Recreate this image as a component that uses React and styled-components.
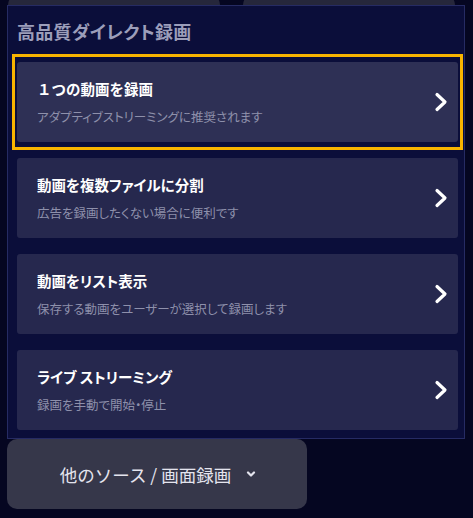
import styled, { createGlobalStyle } from 'styled-components'

const GlobalStyle = createGlobalStyle`
  html, body {
    margin: 0;
    padding: 0;
    background: #050621;
  }
  body {
    font-family: "Noto Sans CJK JP", "Noto Sans", sans-serif;
    width: 473px;
    height: 518px;
    overflow: hidden;
  }
`

const Page = styled.div`
  display: flex;
  flex-direction: column;
  align-items: flex-start;
`

const TabStrip = styled.div`
  display: flex;
  align-items: flex-end;
  gap: 23px;
  height: 5px;
  overflow: hidden;
  padding-left: 8px;
`

const Tab = styled.div`
  width: 212px;
  height: 11px;
  border-radius: 12px 12px 0 0;
  background: #26273b;
`

const Panel = styled.div`
  margin-left: 7px;
  width: 458px;
  border: 1px solid #262b63;
  background: #0b0e3a;
  padding: 12px 1px 0 4px;
  box-sizing: border-box;
`

const Heading = styled.h2`
  margin: 0 0 10px 5px;
  font-size: 18px;
  line-height: 26px;
  font-weight: 700;
  color: #9c9eba;
  font-feature-settings: "palt";
  letter-spacing: 0.3px;
`

const Options = styled.div`
  display: flex;
  flex-direction: column;
`

const Option = styled.div`
  padding: 5px 2px;
  border: 3px solid ${({ selected }) => (selected ? '#f8b400' : 'transparent')};
`

const Card = styled.div`
  height: 80px;
  display: flex;
  align-items: center;
  justify-content: space-between;
  padding: 0 10px 0 20px;
  border-radius: 3px;
  background: ${({ selected }) => (selected ? '#2e3055' : '#26284e')};
  cursor: pointer;
`

const Texts = styled.div`
  display: flex;
  flex-direction: column;
  gap: 9px;
`

const Title = styled.div`
  font-size: 14.5px;
  line-height: 20px;
  font-weight: 700;
  color: #ffffff;
  font-feature-settings: ${({ $palt }) => ($palt ? '"palt"' : 'normal')};
`

const Sub = styled.div`
  font-size: 12.5px;
  line-height: 18px;
  color: #8e90ab;
  font-feature-settings: "palt";
`

const Chevron = styled.svg`
  width: 14px;
  height: 20px;
  flex: none;
`

const SourceButton = styled.button`
  margin-left: 7px;
  width: 300px;
  height: 70px;
  border: none;
  border-radius: 10px;
  background: #36374a;
  display: flex;
  align-items: center;
  justify-content: center;
  gap: 15px;
  font-family: inherit;
  font-size: 17.5px;
  color: #e4e4ee;
  padding: 0 0 0 2px;
  cursor: pointer;
`

const Caret = styled.svg`
  width: 10px;
  height: 7px;
  margin-top: 1px;
`

const options = [
  { title: '１つの動画を録画', sub: 'アダプティブストリーミングに推奨されます', selected: true, palt: false },
  { title: '動画を複数ファイルに分割', sub: '広告を録画したくない場合に便利です', palt: true },
  { title: '動画をリスト表示', sub: '保存する動画をユーザーが選択して録画します', palt: true },
  { title: 'ライブ ストリーミング', sub: '録画を手動で開始・停止', palt: true },
]

function App() {
  return (
    <Page>
      <GlobalStyle />
      <TabStrip>
        <Tab />
        <Tab />
      </TabStrip>
      <Panel>
        <Heading>高品質ダイレクト録画</Heading>
        <Options>
          {options.map((o) => (
            <Option key={o.title} selected={o.selected}>
              <Card selected={o.selected}>
                <Texts>
                  <Title $palt={o.palt}>{o.title}</Title>
                  <Sub>{o.sub}</Sub>
                </Texts>
                <Chevron viewBox="0 0 14 20">
                  <polyline
                    points="3,2.5 11,10 3,17.5"
                    fill="none"
                    stroke="#ffffff"
                    strokeWidth="3.2"
                    strokeLinecap="round"
                    strokeLinejoin="round"
                  />
                </Chevron>
              </Card>
            </Option>
          ))}
        </Options>
      </Panel>
      <SourceButton>
        他のソース / 画面録画
        <Caret viewBox="0 0 10 7">
          <polyline
            points="2,1.5 5,4.5 8,1.5"
            fill="none"
            stroke="#e4e4ee"
            strokeWidth="2.2"
            strokeLinecap="round"
            strokeLinejoin="round"
          />
        </Caret>
      </SourceButton>
    </Page>
  )
}

export default App
